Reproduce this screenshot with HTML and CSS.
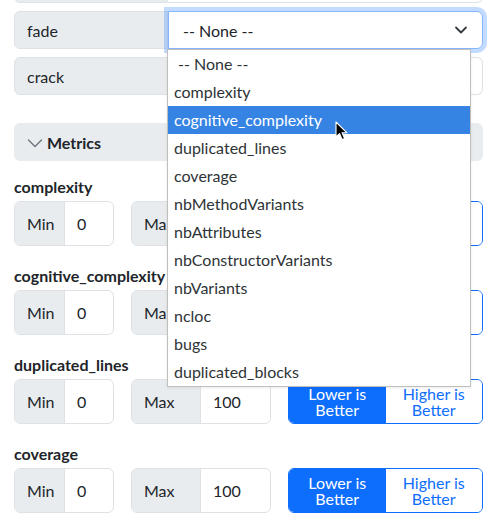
FILE: index.html
```html
<!DOCTYPE html>
<html>
<head>
<meta charset="utf-8">
<link rel="stylesheet" href="styles.css">
</head>
<body>
<div class="page">
  <div class="ig ig-top">
    <span class="ig-label"></span>
    <div class="ig-field"></div>
  </div>
  <div class="ig">
    <span class="ig-label">fade</span>
    <div class="ig-field select-focus">
      <span>-- None --</span>
      <svg class="sel-chev" width="14" height="10" viewBox="0 0 14 10"><path d="M2 2.5 L7 7.5 L12 2.5" fill="none" stroke="#343a40" stroke-width="1.8" stroke-linecap="round" stroke-linejoin="round"/></svg>
    </div>
  </div>
  <div class="ig">
    <span class="ig-label">crack</span>
    <div class="ig-field"></div>
  </div>

  <div class="section-head">
    <svg class="head-chev" width="16" height="12" viewBox="0 0 16 12"><path d="M1.5 3 L8 9.5 L14.5 3" fill="none" stroke="#6c757d" stroke-width="1.4" stroke-linecap="round" stroke-linejoin="round"/></svg>
    <span>Metrics</span>
  </div>

  <div class="metric">
    <div class="metric-name">complexity</div>
    <div class="metric-row">
      <div class="ig2 ig-min"><span class="ig2-label">Min</span><span class="ig2-val">0</span></div>
      <div class="ig2 ig-max"><span class="ig2-label">Max</span><span class="ig2-val">100</span></div>
      <div class="btn-group"><span class="btn btn-on">Lower is<br>Better</span><span class="btn btn-off">Higher is<br>Better</span></div>
    </div>
  </div>
  <div class="metric">
    <div class="metric-name">cognitive_complexity</div>
    <div class="metric-row">
      <div class="ig2 ig-min"><span class="ig2-label">Min</span><span class="ig2-val">0</span></div>
      <div class="ig2 ig-max"><span class="ig2-label">Max</span><span class="ig2-val">100</span></div>
      <div class="btn-group"><span class="btn btn-on">Lower is<br>Better</span><span class="btn btn-off">Higher is<br>Better</span></div>
    </div>
  </div>
  <div class="metric">
    <div class="metric-name">duplicated_lines</div>
    <div class="metric-row">
      <div class="ig2 ig-min"><span class="ig2-label">Min</span><span class="ig2-val">0</span></div>
      <div class="ig2 ig-max"><span class="ig2-label">Max</span><span class="ig2-val">100</span></div>
      <div class="btn-group"><span class="btn btn-on">Lower is<br>Better</span><span class="btn btn-off">Higher is<br>Better</span></div>
    </div>
  </div>
  <div class="metric">
    <div class="metric-name">coverage</div>
    <div class="metric-row">
      <div class="ig2 ig-min"><span class="ig2-label">Min</span><span class="ig2-val">0</span></div>
      <div class="ig2 ig-max"><span class="ig2-label">Max</span><span class="ig2-val">100</span></div>
      <div class="btn-group"><span class="btn btn-on">Lower is<br>Better</span><span class="btn btn-off">Higher is<br>Better</span></div>
    </div>
  </div>
</div>

<ul class="dropdown">
  <li class="opt opt-none">-- None --</li>
  <li class="opt">complexity</li>
  <li class="opt opt-active">cognitive_complexity</li>
  <li class="opt">duplicated_lines</li>
  <li class="opt">coverage</li>
  <li class="opt">nbMethodVariants</li>
  <li class="opt">nbAttributes</li>
  <li class="opt">nbConstructorVariants</li>
  <li class="opt">nbVariants</li>
  <li class="opt">ncloc</li>
  <li class="opt">bugs</li>
  <li class="opt">duplicated_blocks</li>
</ul>

<svg class="cursor" width="14" height="21" viewBox="0 0 14 21"><path d="M1 1 L1 16 L4.6 12.6 L7.2 18.6 L9.6 17.6 L7.1 11.8 L12 11.8 Z" fill="#000" stroke="#fff" stroke-width="1.1" stroke-linejoin="round"/></svg>
</body>
</html>
```
FILE: styles.css
```css
html, body {
  margin: 0;
  padding: 0;
  background: #fff;
  overflow: hidden;
}
body {
  font-family: Lato, "Noto Sans", sans-serif;
  font-size: 16px;
  color: #212529;
  position: relative;
  height: 529px;
}
.page {
  padding: 0 8px 0 14px;
  width: 469px;
}
.ig {
  display: flex;
  height: 38px;
  margin-bottom: 8px;
}
.ig-top {
  margin-top: -35px;
}
.ig-label {
  box-sizing: border-box;
  width: 154px;
  flex: none;
  background: #e9ecef;
  border: 1px solid #dee2e6;
  border-radius: 6px 0 0 6px;
  padding: 0 12px;
  display: flex;
  align-items: center;
}
.ig-field {
  box-sizing: border-box;
  flex: 1;
  background: #fff;
  border: 1px solid #dee2e6;
  border-left: none;
  border-radius: 0 6px 6px 0;
  display: flex;
  align-items: center;
  padding: 0 15px;
}
.select-focus {
  border: 1px solid #86b7fe;
  box-shadow: 0 0 0 4px rgba(13, 110, 253, 0.25);
  justify-content: space-between;
  padding: 0 14px 0 14px;
  position: relative;
  z-index: 1;
}
.sel-chev {
  display: block;
}
.section-head {
  margin-top: 28px;
  height: 38px;
  background: #e9ecef;
  border-radius: 6px;
  display: flex;
  align-items: center;
  padding-left: 13px;
  font-weight: 700;
  margin-bottom: 14px;
}
.head-chev {
  margin-right: 4px;
  margin-top: 2px;
}
.metric {
  margin-bottom: 18px;
}
.metric-name {
  font-weight: 700;
  line-height: 24px;
  margin-bottom: 2px;
}
.metric-row {
  display: grid;
  grid-template-columns: 100px 140px 1fr;
  column-gap: 17px;
  height: 45px;
}
.ig2 {
  display: flex;
  border: 1px solid #dee2e6;
  border-radius: 6px;
  overflow: hidden;
}
.ig2-label {
  background: #e9ecef;
  border-right: 1px solid #dee2e6;
  display: flex;
  align-items: center;
  padding: 0 12px;
  flex: none;
}
.ig-min .ig2-label { width: 50px; box-sizing: border-box; }
.ig-max .ig2-label { width: 69px; box-sizing: border-box; }
.ig2-val {
  display: flex;
  align-items: center;
  padding: 0 12px;
  flex: 1;
}
.btn-group {
  display: flex;
  border: 1px solid #0d6efd;
  border-radius: 6px;
  overflow: hidden;
}
.btn {
  flex: 1;
  display: flex;
  align-items: center;
  justify-content: center;
  text-align: center;
  line-height: 16px;
}
.btn-on {
  background: #0d6efd;
  color: #fff;
}
.btn-off {
  background: #fff;
  color: #0d6efd;
}
.dropdown {
  position: absolute;
  left: 167px;
  top: 49px;
  width: 302px;
  margin: 0;
  padding: 0;
  list-style: none;
  background: #fff;
  border: 1px solid #c0bfbc;
  z-index: 5;
  box-shadow: 0 1px 3px rgba(0,0,0,0.08);
}
.opt {
  height: 28px;
  line-height: 28px;
  padding-left: 6px;
  color: #2e3436;
}
.opt-none {
  padding-left: 10px;
}
.opt-active {
  background: #3584e4;
  color: #fff;
}
.cursor {
  position: absolute;
  left: 335px;
  top: 121px;
  z-index: 10;
}
```
